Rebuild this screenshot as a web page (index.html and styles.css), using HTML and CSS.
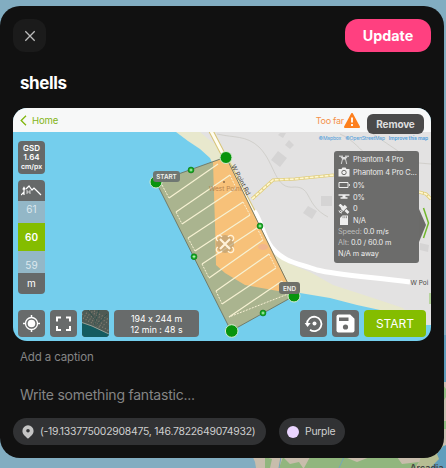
FILE: index.html
```html
<!DOCTYPE html>
<html lang="en">
<head>
<meta charset="utf-8">
<title>shells</title>
<link rel="stylesheet" href="styles.css">
</head>
<body>
<svg class="backdrop" viewBox="0 0 446 468" aria-hidden="true">
  <rect width="446" height="468" fill="#82adc1"/>
  <rect x="440" y="335" width="6" height="50" fill="#609ebd"/>
  <path d="M443 382h3v64h-3z" fill="#c9bfb1"/>
  <path d="M443 385l3 4v8l-3 5zM443 421h3v8h-3z" fill="#91bd83"/>
  <path d="M252 455h194v13H256l-1-6z" fill="#c8bdac"/>
  <path d="M265 457l7 2-2 9h-5zM283 457l7 7 9-2 4 6h-24zM310 457l37 1 10 4 13-5h27l5 7 17-2-4 6H304z" fill="#91b67e"/>
  <path d="M428 457l9-8 9-4v23h-16l4-5z" fill="#609ebd"/>
  <path d="M421 457l8-4 9-9 6 1-7 9 2 5-9 9h-13z" fill="#b6bd93"/>
  <path d="M281 457l-2 11M344 457l-5 11" stroke="#75a7b9" fill="none"/>
  <text class="place" x="410" y="471">Arcadia</text>
</svg>
<main class="modal">
  <header class="top">
    <button class="close" aria-label="Close"><svg viewBox="0 0 12 12"><path d="M1.3 1.3l9.4 9.4M10.7 1.3l-9.4 9.4"/></svg></button>
    <button class="update">Update</button>
  </header>
  <h1>shells</h1>
  <section class="picture">
    <svg class="map" viewBox="13 108 418 233">
      <rect x="13" y="108" width="418" height="233" fill="#74ceed"/>
      <path d="M176 132H431V325L405 315 380 310 357 305 330 298 300 293 278 291 245 285 225 273 216 265 215 225 214 167 210 158 200 149 188 141Z" fill="#e8e8cd"/>
      <path d="M200 132H431V325H418L403 308 373 298 333 285 310 272 290 264 277 255 260 228 229 155 213 143Z" fill="#e3e2e2"/>
      <path d="M278 151l9 7-7 9-9-7zM289 140l5 5-4 4-5-4zM280 133h6l-3 5-5-3zM308 206l9 5-5 8-9-6zM321 196h11v10h-11zM420 243l9 2-1 7-8-2z" fill="#d5d4d4"/>
      <g fill="none" stroke="#cbcac5" stroke-width=".8"><path d="M217 134c17 4 29 1 42 13 17 17 15 43 36 40 17 0 10 18 33 30M340 134c14 6 22 18 24 18M373 134l25 17M419 163l12 1"/></g>
      <path d="M252 199l21-19 22-1 39-4M419 192l7 2 5 5" fill="none" stroke="#dfcc79" stroke-width="3.200"/>
      <path d="M252 199l21-19 22-1 39-4M419 192l7 2 5 5" fill="none" stroke="#fff7cf" stroke-width="1.700" stroke-dasharray="4 1"/>
      <path d="M211 131l47 90" fill="none" stroke="#d7c476" stroke-width="5"/>
      <path d="M211 131l47 90" fill="none" stroke="#fffdf0" stroke-width="3"/>
      <path d="M254 211c7 9 9 26 18 37 13 15 26 15 45 22 20 5 54 7 93 12" fill="none" stroke="#fff" stroke-width="5"/>
      <path d="M156 182L226 157 294 296 231 331Z" fill="#aab48f"/>
      <path d="M213 162L226 157 292 291 278 291 245 285 225 273 216 265 215 225Z" fill="#f7c179"/>
      <path d="M156 182L226 157 294 296 231 331Z" fill="none" stroke="#6d7462" stroke-width=".9"/>
      <path d="M169 198L218 164M176 212L230 175M182 224L236 188M188 238L243 202M195 251L250 215M202 264L257 228M209 278L263 240M216 291L269 254M222 304L276 268M229 317L282 281" stroke="#f6f1d2" stroke-width="1.25"/>
      <path d="M162 185l7 13M230 175l6 13M176 212l6 12M243 202l7 13M188 238l7 13M257 228l6 12M202 264l7 14M269 254l7 14M216 291l6 13M282 281l6 13-59 23" fill="none" stroke="#f8f0d4" stroke-width="1" stroke-dasharray="2 1.2"/>
      <text class="poi" x="209" y="191">West Point</text><circle cx="224" cy="182" r="1" fill="#8d6a49"/>
      <text class="road" transform="translate(231 166) rotate(62)">W Point Rd</text>
      <text class="road" x="410.500" y="285">W Poi</text>
      <circle cx="225" cy="244" r="9" fill="#b19a73" opacity=".6"/>
      <path d="M220 239l10 10M230 239l-10 10" stroke="#fff2d9" stroke-width="2.2"/>
      <g fill="none" stroke="#fff2d9" stroke-width="1.3"><path d="M218 241a3 3 0 1 1 4-4M228 237a3 3 0 1 1 4 4M232 247a3 3 0 1 1-4 4M222 251a3 3 0 1 1-4-4"/></g>
      <ellipse cx="263" cy="247" rx="5" ry="3" fill="#f0b58c"/>
      <g fill="#08940d" stroke="#d5ecd0"><circle cx="156" cy="182" r="6"/><circle cx="226" cy="157.500" r="6"/><circle cx="294" cy="296" r="6"/><circle cx="231.700" cy="331" r="6.300"/></g>
      <g fill="#11a61c" stroke="#076a12" stroke-width=".5"><circle cx="191" cy="170" r="3"/><circle cx="260" cy="226" r="3"/><circle cx="194" cy="256.700" r="3"/><circle cx="263" cy="313" r="3"/></g>
      <path d="M189.500 170h3m-1.500-1.500v3M258.500 226h3m-1.500-1.500v3M192.500 256.700h3m-1.500-1.500v3M261.500 313h3m-1.500-1.500v3" stroke="#d7ffd7" stroke-width=".8"/>
      <rect x="153" y="171" width="27" height="11" rx="3" fill="#6f7772"/><text class="tag" x="166.500" y="179">START</text>
      <rect x="279" y="282" width="21" height="12" rx="3" fill="#6f7069"/><text class="tag" x="289.500" y="290.700">END</text>
      <path d="M419 209v33l7-17z" fill="#6b6b69"/><path d="M423.500 208l5 15-5 15" fill="none" stroke="#70b72c" stroke-width="1.500"/>
      <path d="M430 293v11" stroke="#8ac658" stroke-width="1"/>
    </svg>
    <div class="overlay">
      <div class="bar">
        <svg class="back" viewBox="0 0 7 11"><path d="M6 .8L1.200 5.500 6 10.200"/></svg><span class="home">Home</span>
        <span class="far">Too far</span>
        <svg class="warn" viewBox="0 0 16 15"><path d="M8 1L15 14H1Z" fill="#fd7f1d" stroke="#fd7f1d" stroke-width="2" stroke-linejoin="round"/><path d="M8 4.500v5M8 11v2" stroke="#fff" stroke-width="1.800"/></svg>
        <button class="remove">Remove</button>
      </div>
      <div class="credits"><span>©Mapbox</span><span>©OpenStreetMap</span><b>Improve this map</b></div>
      <div class="middle">
        <div class="left">
          <div class="gsd">GSD<br>1.64<br><small>cm/px</small></div>
          <div class="altitude">
            <div class="terrain"><svg viewBox="0 0 21 11"><path d="M0 10l3-3v3M3 3v5M1.800 4.500L3 2.500l1.200 2M5 4l3-3 3 4 2-2 3 3 4 4" fill="none" stroke="#fff" stroke-width="1.200"/><path d="M6 5v4m3-4v4M6 7h3" stroke="#fff" stroke-width=".7"/></svg></div>
            <div class="near up">61</div><div class="current">60</div><div class="near down">59</div><div class="unit">m</div>
          </div>
        </div>
        <div class="info">
          <div class="row tall"><svg viewBox="0 0 12 10"><path d="M1 1.200h4M7 1.200h4" /><path d="M2.500 2h7L7.500 4.500h-3z" fill="#ddd" stroke="none"/><path d="M4.500 4L3.300 9M7.500 4l1.200 5" stroke-width=".8"/></svg>Phantom 4 Pro</div>
          <div class="row tall"><svg viewBox="0 0 12 10"><path d="M.5 2h3l1-1.500h3l1 1.500h3v7.500H.5z" fill="#eee" stroke="none"/><circle cx="6" cy="5.500" r="2.200" stroke="#6d6d6b"/></svg>Phantom 4 Pro C...</div>
          <div class="row battery"><svg viewBox="0 0 12 10"><path d="M1 2.500h9v5H1zM11.300 4v2"/></svg>0%</div>
          <div class="row"><svg viewBox="0 0 12 10"><path d="M.5 3h11" stroke-width="1.400"/><path d="M4.500 3h3v2.200h2v1.600h-7V5.200h2z" fill="#eee" stroke="none"/></svg>0%</div>
          <div class="row"><svg viewBox="0 0 12 10"><path d="M1.500.500l3 3M7.500 6l3 3" stroke-width="2.600"/><path d="M4 6l4-4" stroke-width="3.500"/><path d="M1 6.500q0 2.500 3 2.500M2.500 6q0 1.500 2 1.500"/></svg>0</div>
          <div class="row"><svg viewBox="0 0 12 10"><path d="M2 10V3l2.500-2.500H10V10z" fill="#eee" stroke="none"/><path d="M5 1.200v2M6.800 1.200v2M8.500 1.200v2" stroke="#6d6d6b" stroke-width=".7"/></svg>N/A</div>
          <div class="stat"><i>Speed:</i> 0.0 m/s</div>
          <div class="stat"><i>Alt:</i> 0.0 / 60.0 m</div>
          <div class="stat">N/A m away</div>
        </div>
      </div>
      <div class="controls">
        <button aria-label="Locate"><svg viewBox="0 0 27 27"><circle cx="13.500" cy="13.500" r="6" fill="none" stroke="#fff" stroke-width="1.300"/><circle cx="13.500" cy="13.500" r="3.800" fill="#fff"/><path d="M13.500 5v3M13.500 19v3M5 13.500h3M19 13.500h3" stroke="#fff" stroke-width="1.500"/></svg></button>
        <button aria-label="Expand"><svg viewBox="0 0 27 27"><path d="M7 11.500V7.500h4M16 7.500h4v4M20 16v4h-4M11 20H7v-4" fill="none" stroke="#fff" stroke-width="2"/></svg></button>
        <button aria-label="Satellite"><svg viewBox="0 0 27 27"><rect width="27" height="27" fill="#4f5b55"/><path d="M4 3l20 13M1 8l18 10M12 1l15 9M0 4l27 17M7 0l20 14" stroke="#817c70" stroke-width="1.500" stroke-dasharray="1 2"/><path d="M17 0l-5 15M25 4L14 16M6 0l7 9" stroke="#264f4c" stroke-width=".7"/><path d="M0 13l9 3 18 8v3H0z" fill="#145b60"/><path d="M0 12.500l10 3.500 17 8" fill="none" stroke="#94a198"/></svg></button>
        <div class="size">194 x 244 m<br>12 min : 48 s</div>
        <button class="reset" aria-label="Reset"><svg viewBox="0 0 27 27"><path d="M7 14a7.200 7.200 0 1 1 3 5.800" fill="none" stroke="#fff" stroke-width="1.800"/><path d="M4.700 13h6L7.500 17z" fill="#fff"/><circle cx="14.500" cy="13.500" r="2" fill="#fff"/></svg></button>
        <button aria-label="Save"><svg viewBox="0 0 27 27"><path d="M6.500 4.500h11.700l4.300 4.300v11.700a2 2 0 0 1-2 2h-14a2 2 0 0 1-2-2v-14a2 2 0 0 1 2-2z" fill="#fff"/><path d="M7 7.500h9.500v3.500H7z" fill="#6b6c6b"/><circle cx="13.500" cy="17" r="2.600" fill="#6b6c6b"/></svg></button>
        <button class="start">START</button>
      </div>
    </div>
  </section>
  <label class="caption">Add a caption</label>
  <p class="prompt">Write something fantastic...</p>
  <footer class="chips">
    <span class="chip location"><svg viewBox="0 0 12 14"><path d="M6 .3a5.600 5.600 0 0 1 5.600 5.600C11.600 9.500 8 11.500 6 13.800 4 11.500.4 9.500.4 5.900A5.600 5.600 0 0 1 6 .3z" fill="#c5c5c5"/><circle cx="6" cy="5.700" r="1.800" fill="#343537"/></svg>(-19.133775002908475, 146.7822649074932)</span>
    <span class="chip color"><span class="dot"></span>Purple</span>
  </footer>
</main>
</body>
</html>
```
FILE: styles.css
```css
* { box-sizing: border-box; }
body { margin: 0; width: 446px; height: 468px; overflow: hidden; position: relative; font-family: Inter, "Liberation Sans", sans-serif; font-feature-settings: "calt" 0; color: #fff; }
button { border: 0; padding: 0; margin: 0; font-family: inherit; color: #fff; }
svg { display: block; flex: none; }
.backdrop { position: absolute; inset: 0; width: 446px; height: 468px; }
.place { font-size: 9px; font-weight: 600; fill: #454742; }
.modal { position: relative; width: 444px; height: 452px; margin-top: 6px; padding: 13px; background: #111; border-radius: 20px; overflow: hidden; }
body::before { content: ""; display: table; }
.top { display: flex; justify-content: space-between; height: 33px; }
.close { width: 33px; border-radius: 12px; background: #1b1b1b; display: grid; place-items: center; }
.close svg { width: 12px; height: 12px; stroke: #bcbcbc; stroke-width: 1.3; }
.update { width: 86px; border-radius: 13px; background: #ff4080; font-size: 14.3px; font-weight: 700; }
h1 { margin: 20px 0 0 7px; height: 36px; font-size: 17px; line-height: 23px; font-weight: 700; letter-spacing: -.4px; }
.picture { position: relative; height: 233px; border-radius: 14px; overflow: hidden; }
.map { width: 418px; height: 233px; }
.poi { font-size: 6.5px; fill: #b8834f; }
.road { font-size: 6.5px; fill: #494946; }
.tag { font-size: 6.3px; font-weight: 600; fill: #f1f1ec; text-anchor: middle; }
.overlay { position: absolute; inset: 0; display: flex; flex-direction: column; }
.bar { height: 24px; background: #f7f8f8; display: flex; align-items: center; padding: 0 7px; font-size: 9.5px; }
.back { width: 7px; height: 11px; fill: none; stroke: #80b60b; stroke-width: 1.3; }
.home { margin-left: 5px; color: #83b417; letter-spacing: -.1px; }
.far { margin-left: auto; color: #f4914b; font-size: 9px; letter-spacing: -.25px; }
.warn { width: 16px; height: 15px; }
.remove { width: 57px; height: 20px; margin: 8px 0 0 7px; border-radius: 6px; background: #4a4a4a; color: #dedede; font-size: 10px; font-weight: 700; position: relative; letter-spacing: -.15px; }
.credits { height: 12px; display: flex; justify-content: flex-end; gap: 4px; padding: 3px 3px 0; font-size: 5px; line-height: 7px; letter-spacing: -.15px; color: #4c9cdb; }
.credits b { font-weight: 600; }
.middle { height: 166px; padding: 0 12px 0 5px; display: flex; justify-content: space-between; align-items: flex-start; }
.left { width: 27px; text-align: center; margin-top: -3px; }
.gsd { height: 33px; margin-bottom: 6px; padding-top: 3px; border-radius: 4px; background: #666969; font-size: 8px; line-height: 9px; font-weight: 600; }
.gsd small { font-size: 7px; display: block; margin-top: 0; }
.altitude { border-radius: 4px; overflow: hidden; background: #666969; font-size: 10px; }
.terrain { height: 21px; display: grid; place-items: center; }
.terrain svg { width: 21px; height: 11px; }
.near { height: 22px; background: #93b7c7; color: #dce8ee; line-height: 16px; }
.down { line-height: 28px; }
.current { height: 28px; line-height: 28px; background: #84bd00; font-weight: 600; }
.unit { height: 21px; line-height: 20px; }
.info { width: 85px; height: 112px; margin-top: 7px; padding: 2.5px 0 0 4px; border-radius: 3px; background: #6c6c6b; color: #eee; font-size: 7.4px; letter-spacing: -.1px; white-space: nowrap; }
.row { display: flex; align-items: center; gap: 3px; height: 11.6px; }
.tall { height: 12.5px; }
.battery { height: 13px; }
.row svg { width: 12px; height: 10px; fill: none; stroke: #eee; stroke-width: 1; }
.stat { height: 11px; line-height: 11px; font-size: 7.3px; }
.stat i { font-style: normal; color: #bdbdbb; }
.controls { height: 27px; display: flex; padding: 0 5px; gap: 5px; }
.controls button:not(.start) { width: 27px; border-radius: 4px; overflow: hidden; background: #686b6b; flex: none; }
.controls svg { width: 27px; height: 27px; }
.size { width: 85px; border-radius: 4px; background: #686b6b; text-align: center; font-size: 8.8px; line-height: 11px; padding-top: 3px; }
.controls .reset { margin-left: auto; }
.start { width: 62px; border-radius: 4px; background: #84bd00; font-size: 12px; }
.caption { display: block; margin: 9px 0 0 7px; height: 15px; font-size: 11.5px; line-height: 15px; letter-spacing: -.13px; color: #858585; }
.prompt { margin: 20px 0 0 7px; height: 20px; font-size: 14px; line-height: 20px; letter-spacing: -.22px; color: #858585; }
.chips { display: flex; gap: 13px; margin-top: 13px; }
.chip { height: 27px; border-radius: 14px; background: #313234; display: flex; align-items: center; font-size: 10.4px; letter-spacing: -.25px; color: #cfcfcf; white-space: nowrap; }
.location { width: 253px; padding-left: 9px; gap: 6px; }
.location svg { width: 12px; height: 14px; }
.color { width: 66px; padding-left: 8px; gap: 6px; }
.dot { width: 12px; height: 12px; border-radius: 50%; background: #ead5ff; }
```
